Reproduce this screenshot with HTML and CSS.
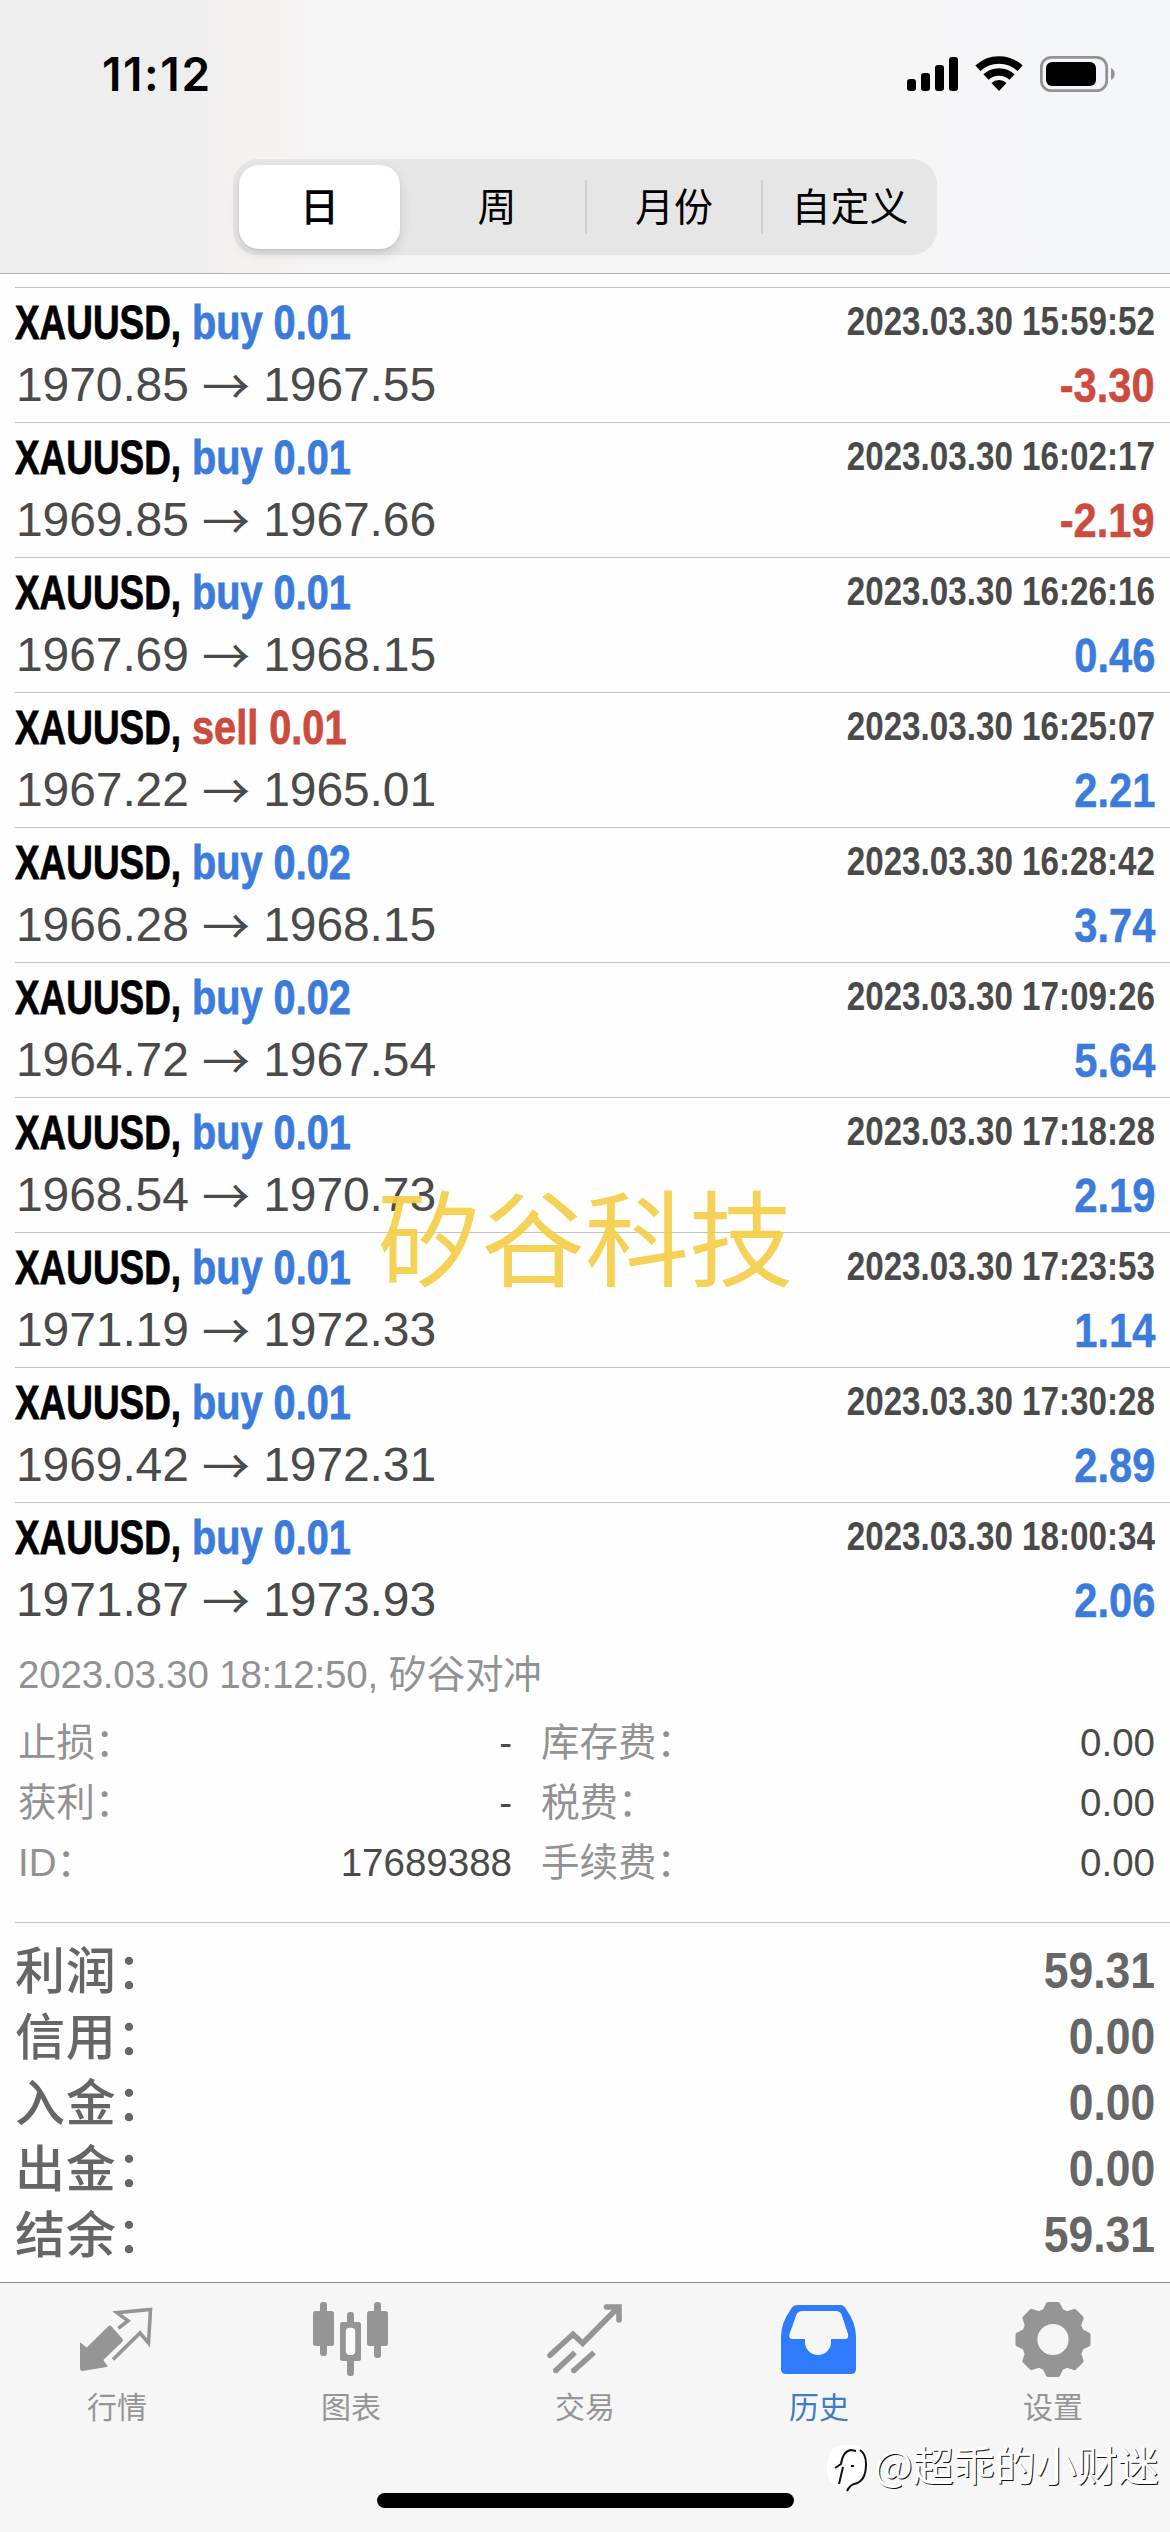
FILE: index.html
```
<!DOCTYPE html>
<html lang="zh-CN">
<head>
<meta charset="utf-8">
<title>历史</title>
<link rel="stylesheet" href="styles.css">
</head>
<body>
<div class="screen">
  <header class="header">
    <div class="status">
      <span class="clock">11:12</span>
      <div class="status-icons">
        <svg width="51" height="38" viewBox="0 0 51 38"><rect y="24" width="9" height="12" rx="3"/><rect x="14" y="18" width="9" height="18" rx="3"/><rect x="28" y="10" width="9" height="26" rx="3"/><rect x="42" y="2" width="9" height="34" rx="3"/></svg>
        <svg width="48" height="38" viewBox="0 0 48 38"><g fill="none" stroke="#000" stroke-width="7.6"><path d="M2.9 13.3a31 31 0 0 1 42.2 0"/><path d="M11 22.1a19 19 0 0 1 26 0"/></g><path d="M16.5 28a11 11 0 0 1 15 0L24 36z"/></svg>
        <svg width="75" height="38" viewBox="0 0 75 38"><rect x="1.3" y="2.3" width="65.4" height="33.4" rx="10" fill="none" stroke="#939395" stroke-width="2.8"/><rect x="6" y="7" width="50" height="24" rx="6"/><path d="M71 13c5 2 5 10 0 12z" fill="#939395"/></svg>
      </div>
    </div>
    <nav class="segments">
      <span class="segment active">日</span>
      <span class="segment">周</span>
      <span class="segment divided">月份</span>
      <span class="segment divided">自定义</span>
    </nav>
  </header>

  <main class="history">
    <section class="deals">
      <article class="deal"><div class="line top"><b class="symbol">XAUUSD,</b> <b class="side buy">buy 0.01</b><time class="time">2023.03.30 15:59:52</time></div><div class="line"><span class="price">1970.85 <i class="arrow">→</i> 1967.55</span><b class="profit loss">-3.30</b></div></article>
      <article class="deal"><div class="line top"><b class="symbol">XAUUSD,</b> <b class="side buy">buy 0.01</b><time class="time">2023.03.30 16:02:17</time></div><div class="line"><span class="price">1969.85 <i class="arrow">→</i> 1967.66</span><b class="profit loss">-2.19</b></div></article>
      <article class="deal"><div class="line top"><b class="symbol">XAUUSD,</b> <b class="side buy">buy 0.01</b><time class="time">2023.03.30 16:26:16</time></div><div class="line"><span class="price">1967.69 <i class="arrow">→</i> 1968.15</span><b class="profit">0.46</b></div></article>
      <article class="deal"><div class="line top"><b class="symbol">XAUUSD,</b> <b class="side sell">sell 0.01</b><time class="time">2023.03.30 16:25:07</time></div><div class="line"><span class="price">1967.22 <i class="arrow">→</i> 1965.01</span><b class="profit">2.21</b></div></article>
      <article class="deal"><div class="line top"><b class="symbol">XAUUSD,</b> <b class="side buy">buy 0.02</b><time class="time">2023.03.30 16:28:42</time></div><div class="line"><span class="price">1966.28 <i class="arrow">→</i> 1968.15</span><b class="profit">3.74</b></div></article>
      <article class="deal"><div class="line top"><b class="symbol">XAUUSD,</b> <b class="side buy">buy 0.02</b><time class="time">2023.03.30 17:09:26</time></div><div class="line"><span class="price">1964.72 <i class="arrow">→</i> 1967.54</span><b class="profit">5.64</b></div></article>
      <article class="deal"><div class="line top"><b class="symbol">XAUUSD,</b> <b class="side buy">buy 0.01</b><time class="time">2023.03.30 17:18:28</time></div><div class="line"><span class="price">1968.54 <i class="arrow">→</i> 1970.73</span><b class="profit">2.19</b></div></article>
      <article class="deal"><div class="line top"><b class="symbol">XAUUSD,</b> <b class="side buy">buy 0.01</b><time class="time">2023.03.30 17:23:53</time></div><div class="line"><span class="price">1971.19 <i class="arrow">→</i> 1972.33</span><b class="profit">1.14</b></div></article>
      <article class="deal"><div class="line top"><b class="symbol">XAUUSD,</b> <b class="side buy">buy 0.01</b><time class="time">2023.03.30 17:30:28</time></div><div class="line"><span class="price">1969.42 <i class="arrow">→</i> 1972.31</span><b class="profit">2.89</b></div></article>
      <article class="deal"><div class="line top"><b class="symbol">XAUUSD,</b> <b class="side buy">buy 0.01</b><time class="time">2023.03.30 18:00:34</time></div><div class="line"><span class="price">1971.87 <i class="arrow">→</i> 1973.93</span><b class="profit">2.06</b></div></article>
    </section>

    <section class="details">
      <p class="comment">2023.03.30 18:12:50, 矽谷对冲</p>
      <dl class="detail-grid">
        <dt>止损：</dt><dd>-</dd><dt>库存费：</dt><dd>0.00</dd>
        <dt>获利：</dt><dd>-</dd><dt>税费：</dt><dd>0.00</dd>
        <dt>ID：</dt><dd>17689388</dd><dt>手续费：</dt><dd>0.00</dd>
      </dl>
    </section>

    <section class="summary">
      <div class="total"><span>利润：</span><b>59.31</b></div>
      <div class="total"><span>信用：</span><b>0.00</b></div>
      <div class="total"><span>入金：</span><b>0.00</b></div>
      <div class="total"><span>出金：</span><b>0.00</b></div>
      <div class="total"><span>结余：</span><b>59.31</b></div>
    </section>
  </main>

  <footer class="tabbar">
    <nav class="tabs">
      <a class="tab"><svg width="90" height="80" viewBox="0 0 90 80"><path fill="currentColor" d="M8 42.3l6.7 5.2L36.6 26q1.4-1.2 2.8.2l11 12.6q1.4 1.7 0 3L31.3 60l4.7 6.7L10.5 71Q8 71 8 68z"/><path fill="none" stroke="currentColor" stroke-width="3.6" d="M46.3 28.3l9.7-7.6-11-8 33.5-3.2-2 33.5-8.500-10-27 26.500"/></svg><span>行情</span></a>
      <a class="tab"><svg width="90" height="80" viewBox="0 0 90 80" fill="currentColor"><rect x="7" y="11" width="21" height="35" rx="2.5"/><rect x="14" y="2" width="7" height="54" rx="3"/><rect x="61" y="11" width="21" height="35" rx="2.5"/><rect x="68" y="2" width="7" height="56" rx="3"/><rect x="41" y="12" width="7" height="64" rx="3"/><rect x="34" y="22" width="21" height="39" rx="2.5"/><rect x="39.8" y="27.7" width="9.4" height="27.3" rx="4" fill="#fafafa"/></svg><span>图表</span></a>
      <a class="tab"><svg width="90" height="80" viewBox="0 0 90 80" fill="none" stroke="currentColor" stroke-width="5.6"><path stroke-linecap="round" d="M10 55.3l23-21 9.7 9L78 7.5"/><path stroke-linecap="round" d="M66.5 7H79v13"/><path d="M15.3 71L35 52.5M33.3 71L54 52.5"/><g fill="currentColor" stroke="none"><circle cx="15.8" cy="70.5" r="2.8"/><circle cx="33.8" cy="70.5" r="2.8"/></g></svg><span>交易</span></a>
      <a class="tab current"><svg width="90" height="80" viewBox="0 0 90 80"><path fill="#2f7bfb" fill-rule="evenodd" d="M24 5h42q4 0 6 4 10 14 10 27v33q0 5-5 5H12q-5 0-5-5V36Q7 23 17 9q2-4 7-4zM28 11q-4 0-5.500 3.500L15.500 34q-1 5 3 5H31v3a13 13 0 0 0 26 0v-3h14q4 0 3-5L67.500 14.500Q66 11 62 11z"/></svg><span>历史</span></a>
      <a class="tab"><svg width="90" height="80" viewBox="0 0 90 80"><g transform="translate(45 39.5)"><circle r="23.6" fill="none" stroke="currentColor" stroke-width="16"/><g fill="currentColor" stroke="currentColor" stroke-width="4" stroke-linejoin="round"><path id="tooth" d="M-9-27.5l4-8H5l4 8z"/><use href="#tooth" transform="rotate(45)"/><use href="#tooth" transform="rotate(90)"/><use href="#tooth" transform="rotate(135)"/><use href="#tooth" transform="rotate(180)"/><use href="#tooth" transform="rotate(225)"/><use href="#tooth" transform="rotate(270)"/><use href="#tooth" transform="rotate(315)"/></g></g></svg><span>设置</span></a>
    </nav>
    <div class="home-indicator"></div>
  </footer>

  <div class="brand-mark">矽谷科技</div>
  <div class="author-mark">
    <svg width="44" height="56" viewBox="0 0 44 56"><path fill="#fff" d="M14 5h16q11 3 11 18 0 19-13 21-6 1-8 6l-4-4q-15 1-16-14Q-1 8 14 5z"/><path fill="none" stroke="#111" stroke-width="2" d="M8 28l6-4q2-13 10-14l5 1M16 27l-4 17M33 10q6 4 6 14 0 18-12 20-4 1-7 7M24 26h3"/></svg>
    <span>@超乖的小财迷</span>
  </div>
</div>
</body>
</html>
```
FILE: styles.css
```
* { box-sizing: border-box; }

body {
  margin: 0;
  background: #fff;
  font-family: "Liberation Sans", "Noto Sans CJK SC", sans-serif;
}

.screen {
  position: relative;
  width: 1170px;
  height: 2532px;
  overflow: hidden;
  display: flex;
  flex-direction: column;
  background: #fefefe;
}

/* Header */
.header {
  height: 274px;
  flex: none;
  border-bottom: 1px solid #b2b2b4;
  background: linear-gradient(90deg, #eee 0, #efeeee 16%, #f5f2f1 21%, #f6f5f5 28%, #f6f6f6 72%, #f4f5f9 100%);
}

.status {
  height: 148px;
  padding: 0 55px 0 102px;
  display: flex;
  align-items: center;
  justify-content: space-between;
}

.clock {
  font: 600 46px/60px Inter, sans-serif;
  letter-spacing: 1.6px;
  color: #000;
}

.status-icons { display: flex; gap: 17px; }

.segments {
  width: 704px;
  height: 96px;
  margin: 11px auto 0;
  padding: 6px 0 6px 6px;
  display: grid;
  grid-template-columns: 161px 185px 176px 176px;
  border-radius: 25px;
  background: #e6e6e7;
}

.segment {
  position: relative;
  padding-left: 2px;
  text-align: center;
  font: 400 39px/78px "Noto Sans CJK SC", sans-serif;
  color: #000;
}

.segment:nth-child(2) { padding-left: 9px; }

.segment.active {
  padding-left: 0;
  background: #fff;
  border-radius: 20px;
  box-shadow: 0 5px 12px rgba(0, 0, 0, .12), 0 1px 2px rgba(0, 0, 0, .08);
  font-weight: 500;
}

.segment.divided::before {
  content: "";
  position: absolute;
  left: 0;
  top: 15px;
  width: 2px;
  height: 54px;
  background: #cfcfd1;
}

/* Deals */
.history {
  height: 2008px;
  flex: none;
  padding-top: 13px;
}

.deals, .details, .summary { margin-left: 15px; }

.deal {
  height: 135px;
  padding: 2px 15px 0 0;
  border-top: 1px solid #c3c3c5;
}

.line {
  display: flex;
  justify-content: space-between;
  height: 62px;
  line-height: 62px;
  white-space: nowrap;
}

.line.top {
  height: 64px;
  line-height: 64px;
}

.symbol, .side {
  font-size: 49px;
  transform-origin: 0 50%;
  -webkit-text-stroke: .8px;
}

.symbol {
  width: 177px;
  color: #000;
  transform: scaleX(.753);
}

.side {
  width: 300px;
  color: #3b7bdc;
  transform: scaleX(.81);
}

.side.sell { color: #cc4b3e; }

.time {
  flex: 1;
  text-align: right;
  font-size: 40px;
  font-weight: 700;
  line-height: 62px;
  color: #4a4a4a;
  transform: scaleX(.83);
  transform-origin: 100% 50%;
}

.price {
  padding-left: 1px;
  font-size: 48px;
  letter-spacing: -.1px;
  color: #4a4a4a;
}

.arrow {
  display: inline-block;
  height: 62px;
  vertical-align: top;
  font: 400 48px/58px "Noto Sans CJK SC", sans-serif;
}

.profit {
  font-size: 49px;
  color: #3b7bdc;
  transform: scaleX(.85);
  transform-origin: 100% 50%;
  -webkit-text-stroke: .5px;
}

.profit.loss { color: #cc4b3e; }

/* Details of the opened deal */
.details {
  padding: 8px 15px 0 3px;
  height: 285px;
  font-size: 38.5px;
  line-height: 60px;
  color: #929292;
}

.comment {
  margin: 0 0 8px;
  height: 60px;
  letter-spacing: -.2px;
}

.detail-grid {
  margin: 0;
  display: grid;
  grid-template-columns: 246px 248px 290px 1fr;
  grid-auto-rows: 60px;
}

.detail-grid dt:nth-of-type(even) { padding-left: 29px; }

.detail-grid dd {
  margin: 0;
  text-align: right;
  color: #4a4a4a;
}

/* Totals */
.summary {
  padding: 15px 15px 0 0;
  border-top: 1px solid #c3c3c5;
  color: #666;
}

.total {
  height: 66px;
  display: flex;
  justify-content: space-between;
  font-size: 50px;
  line-height: 66px;
}

.total span {
  font-family: "Noto Sans CJK SC", sans-serif;
  font-weight: 500;
  line-height: 59px;
  letter-spacing: .8px;
}

.total b {
  transform: scaleX(.89);
  transform-origin: 100% 50%;
}

/* Tab bar */
.tabbar {
  flex: 1;
  border-top: 1px solid #8f8f91;
  background: #f6f6f6;
}

.tabs {
  display: grid;
  grid-template-columns: repeat(5, 1fr);
  padding-top: 17px;
}

.tab {
  display: flex;
  flex-direction: column;
  align-items: center;
  gap: 3px;
  font: 400 30px/44px "Noto Sans CJK SC", sans-serif;
  color: #959595;
}

.tab.current { color: #3f7cc8; }

.home-indicator {
  width: 417px;
  height: 15px;
  margin: 66px auto 0;
  border-radius: 8px;
  background: #000;
}

/* Overlays */
.brand-mark {
  position: absolute;
  left: 377px;
  top: 1159px;
  font: 400 104px/150px "Noto Sans CJK SC", sans-serif;
  color: rgba(244, 205, 72, .93);
  white-space: nowrap;
}

.author-mark {
  position: absolute;
  left: 827px;
  top: 2440px;
  display: flex;
  align-items: flex-start;
  gap: 3px;
  font: 400 41px/46px "Noto Sans CJK SC", sans-serif;
  color: #fff;
  text-shadow: 1px 1px 0 #111;
  white-space: nowrap;
}
```
